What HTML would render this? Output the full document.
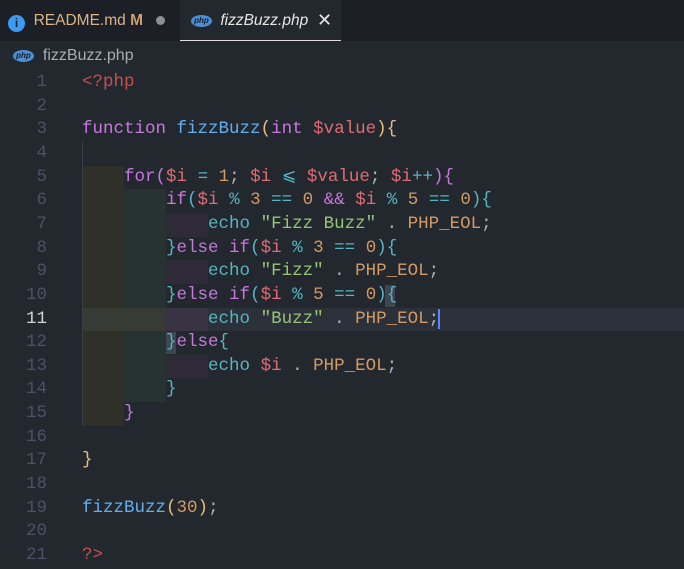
<!DOCTYPE html><html><head><style>
body{margin:0;width:684px;height:569px;background:#23272e;overflow:hidden;font-family:"Liberation Sans",sans-serif;position:relative}
.tabs{position:absolute;left:0;top:0;width:684px;height:41px;background:#1c1f25}
.tab{position:absolute;top:0;height:41px;font-size:15.5px;line-height:41px;white-space:nowrap}
.code{position:absolute;left:0;top:71px;font-family:"Liberation Mono",monospace;font-size:17.5px}
.l{position:absolute;left:0;height:23.65px;line-height:23.65px;white-space:pre}
.n{position:absolute;width:47px;text-align:right;color:#4b5263}
.t{position:absolute;left:82px}
.b{position:absolute}
.k{color:#c678dd}.f{color:#61afef}.v{color:#e06c75}.u{color:#d19a66}.s{color:#98c379}.o{color:#56b6c2}.p{color:#abb2bf}.y{color:#e5c07b}
.php{display:inline-block;width:21px;height:12px;border-radius:50%;background:#4a8fd8;color:#1c1f25;font-size:8px;line-height:12px;text-align:center;font-style:italic;font-weight:bold;vertical-align:middle}
</style></head><body>
<div class="tabs">
<div class="tab" style="left:8px;color:#d8b589"><span style="display:inline-block;width:17px;height:17px;border-radius:50%;background:#3b9bf0;color:#1c1f25;font-size:12px;line-height:17px;text-align:center;font-weight:bold;vertical-align:-2px">i</span>&nbsp; README.md <b style="color:#c8a070">M</b></div>
<span style="position:absolute;left:156px;top:16px;width:9px;height:9px;border-radius:50%;background:#8a8f98"></span>
<div class="tab" style="left:180px;width:161px;background:#23272e;border-bottom:1px solid #e0e0e0;height:40px;color:#e6e6e6"><span class="php" style="margin-left:11px">php</span> <i style="margin-left:4px">fizzBuzz.php</i><span style="position:absolute;left:137px;top:0;font-size:18px">✕</span></div>
</div>
<div style="position:absolute;left:13px;top:45px;font-size:16px;color:#a8adb5;line-height:21px;white-space:nowrap"><span class="php">php</span>&nbsp; fizzBuzz.php</div>
<div class="code">
<div class="b" style="left:82px;top:94.6px;width:42px;height:260px;background:#2f3129"></div>
<div class="b" style="left:124px;top:118px;width:42px;height:213px;background:#263330"></div>
<div class="b" style="left:166px;top:141.9px;width:42px;height:23.65px;background:#2f2a38"></div>
<div class="b" style="left:166px;top:189.2px;width:42px;height:23.65px;background:#2f2a38"></div>
<div class="b" style="left:82px;top:236.5px;width:602px;height:23.65px;background:#2c3038"></div>
<div class="b" style="left:82px;top:236.5px;width:84px;height:23.65px;background:#373a35"></div>
<div class="b" style="left:166px;top:236.5px;width:42px;height:23.65px;background:#383444"></div>
<div class="b" style="left:166px;top:283.8px;width:42px;height:23.65px;background:#2f2a38"></div>
<div class="b" style="left:82px;top:70px;width:1px;height:284px;background:#3a3f48"></div>
<div class="b" style="left:438px;top:238px;width:2px;height:20px;background:#528bff"></div>
<div class="b" style="left:385px;top:214px;width:10px;height:22px;background:#3e4652"></div>
<div class="b" style="left:166px;top:261px;width:10px;height:22px;background:#3e4652"></div>
</div>
<div class="code" id="c"></div>
<script>
const L=[
'<span class="v" style="color:#c94f4f">&lt;?php</span>','',
'<span class="k">function</span> <span class="f">fizzBuzz</span><span class="y">(</span><span class="k">int</span> <span class="v">$value</span><span class="y">){</span>','',
'    <span class="k">for</span><span class="k">(</span><span class="v">$i</span> <span class="o">=</span> <span class="u">1</span><span class="p">;</span> <span class="v">$i</span> <span class="o">⩽</span> <span class="v">$value</span><span class="p">;</span> <span class="v">$i</span><span class="o">++</span><span class="k">){</span>',
'        <span class="k">if</span><span class="o">(</span><span class="v">$i</span> <span class="o">%</span> <span class="u">3</span> <span class="o">==</span> <span class="u">0</span> <span class="k">&amp;&amp;</span> <span class="v">$i</span> <span class="o">%</span> <span class="u">5</span> <span class="o">==</span> <span class="u">0</span><span class="o">){</span>',
'            <span class="o">echo</span> <span class="s">"Fizz Buzz"</span> <span class="p">.</span> <span class="u">PHP_EOL</span><span class="p">;</span>',
'        <span class="o">}</span><span class="k">else if</span><span class="o">(</span><span class="v">$i</span> <span class="o">%</span> <span class="u">3</span> <span class="o">==</span> <span class="u">0</span><span class="o">){</span>',
'            <span class="o">echo</span> <span class="s">"Fizz"</span> <span class="p">.</span> <span class="u">PHP_EOL</span><span class="p">;</span>',
'        <span class="o">}</span><span class="k">else if</span><span class="o">(</span><span class="v">$i</span> <span class="o">%</span> <span class="u">5</span> <span class="o">==</span> <span class="u">0</span><span class="o">){</span>',
'            <span class="o">echo</span> <span class="s">"Buzz"</span> <span class="p">.</span> <span class="u">PHP_EOL</span><span class="p">;</span>',
'        <span class="o">}</span><span class="k">else</span><span class="o">{</span>',
'            <span class="o">echo</span> <span class="v">$i</span> <span class="p">.</span> <span class="u">PHP_EOL</span><span class="p">;</span>',
'        <span class="o">}</span>',
'    <span class="k">}</span>','',
'<span class="y">}</span>','',
'<span class="f">fizzBuzz</span><span class="y">(</span><span class="u">30</span><span class="y">)</span><span class="p">;</span>','',
'<span class="v" style="color:#c94f4f">?&gt;</span>'];
let h='';L.forEach((s,i)=>{h+=`<div class="l" style="top:${i*23.65}px"><span class="n" style="${i==10?'color:#d0d4da':''}">${i+1}</span><span class="t">${s}</span></div>`});
document.getElementById('c').innerHTML=h;
</script>
</body></html>
